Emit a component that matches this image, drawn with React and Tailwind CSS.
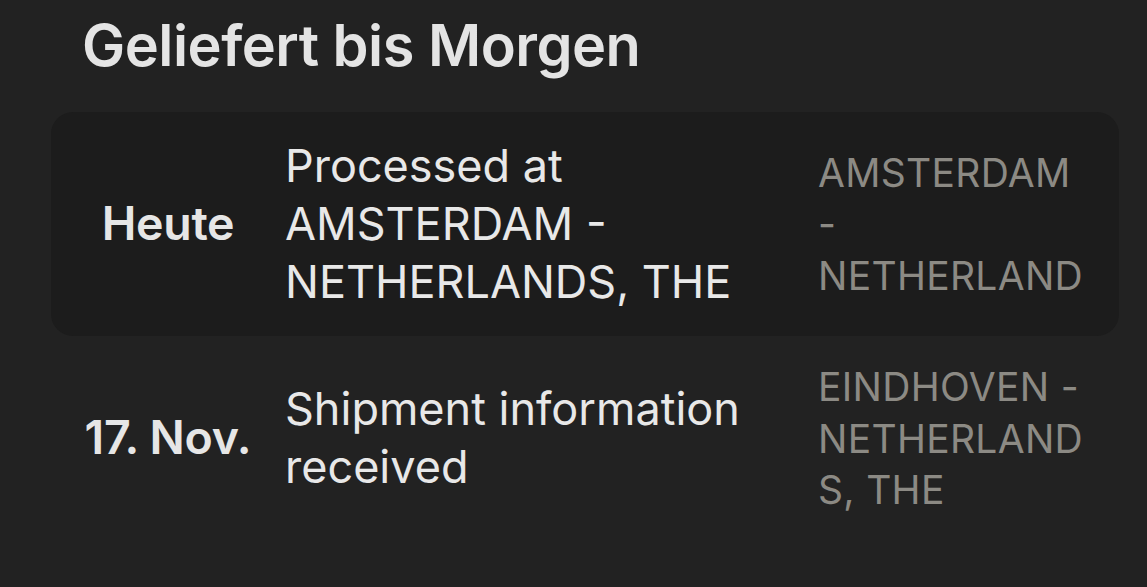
import React from "react";

const events = [
    {
        date: "Heute",
        status: ["Processed at", "AMSTERDAM -", "NETHERLANDS, THE"],
        place: ["AMSTERDAM", "-", "NETHERLAND"],
        active: true,
    },
    {
        date: "17. Nov.",
        status: ["Shipment information", "received"],
        place: ["EINDHOVEN -", "NETHERLAND", "S, THE"],
        active: false,
    },
];

function EventRow({ event }) {
    return (
        <div
            className={`grid grid-cols-[234px_533px_1fr] items-center rounded-[22px] py-[25px] ${event.active ? "bg-[#1c1c1c]" : ""}`}
        >
            <div className="text-center text-[46.5px] font-semibold tracking-[-0.3px] text-[#e6e6e6]">
                {event.date}
            </div>
            <div className="text-[45px] leading-[58px] text-[#e8e8e8]">
                {event.status.map((line) => (
                    <div key={line} className="whitespace-nowrap">{line}</div>
                ))}
            </div>
            <div className="text-[39px] leading-[51.5px] tracking-[0.3px] text-[#8c8a84]">
                {event.place.map((line) => (
                    <div key={line} className="whitespace-nowrap">{line}</div>
                ))}
            </div>
        </div>
    );
}

export default function App() {
    return (
        <div
            className="h-[587px] w-full overflow-hidden bg-[#222222] pl-[51px] pr-[28px]"
            style={{ fontFamily: "Inter, 'Noto Sans', sans-serif" }}
        >
            <h1 className="pl-[31px] pt-[10px] pb-[32px] text-[57.7px] font-semibold leading-[70px] tracking-[-0.5px] text-[#e4e4e4]">
                Geliefert bis Morgen
            </h1>
            <div className="flex flex-col">
                {events.map((event) => (
                    <EventRow key={event.date} event={event} />
                ))}
            </div>
        </div>
    );
}
